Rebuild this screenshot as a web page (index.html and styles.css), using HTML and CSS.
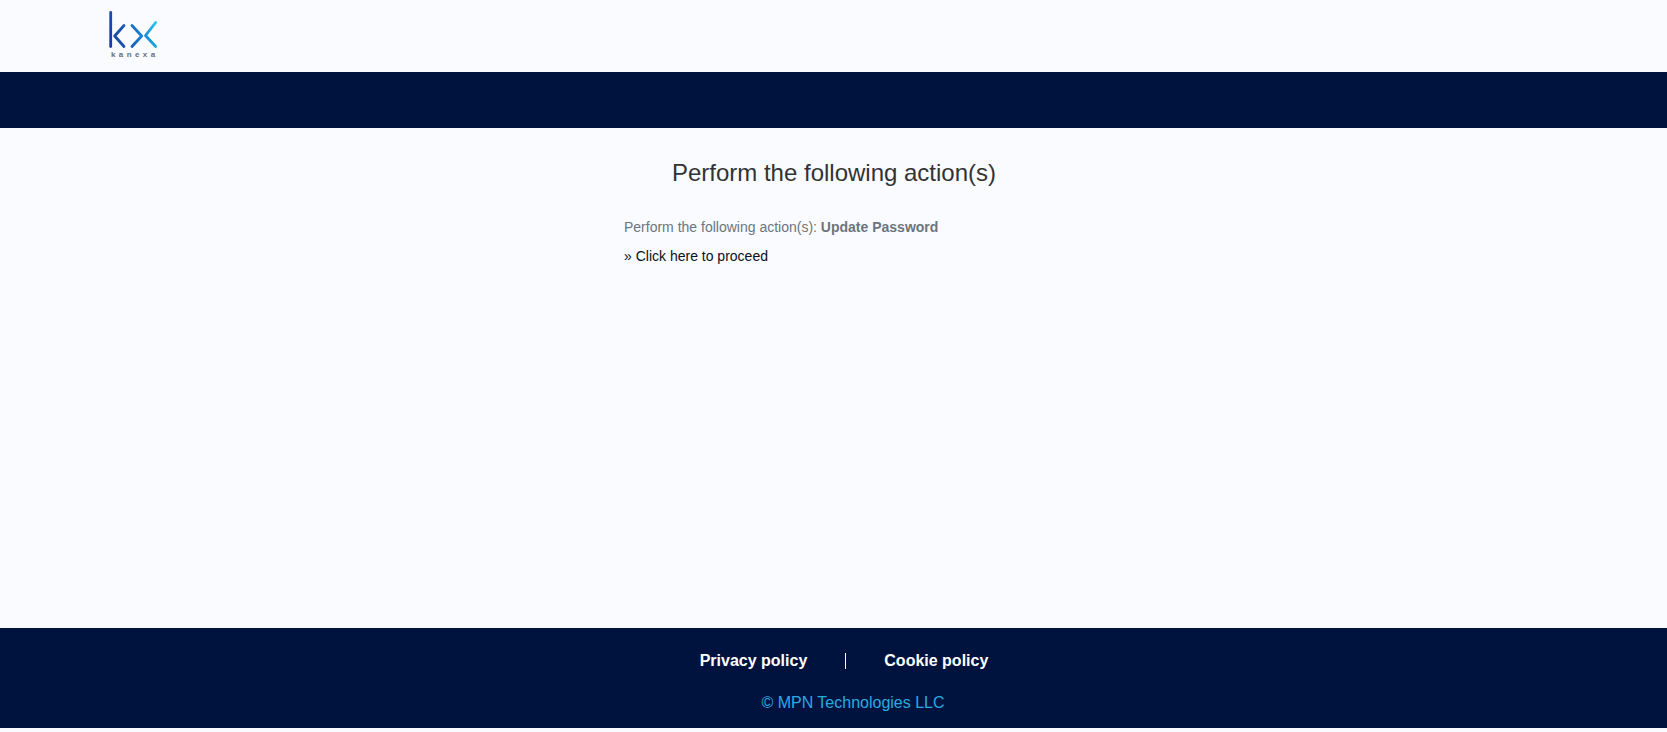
FILE: index.html
```html
<!DOCTYPE html>
<html lang="en">
<head>
<meta charset="utf-8">
<title>Perform the following action(s)</title>
<link rel="stylesheet" href="styles.css">
</head>
<body>
<header class="top">
  <a class="logo" href="#" aria-label="kanexa">
    <svg class="logo-mark" width="50" height="38" viewBox="0 0 50 38" aria-hidden="true">
      <defs>
        <linearGradient id="kx" gradientUnits="userSpaceOnUse" x1="0" y1="30" x2="50" y2="14">
          <stop offset="0" stop-color="#1a3a9c"/>
          <stop offset="0.45" stop-color="#1a62bb"/>
          <stop offset="0.75" stop-color="#1a94d8"/>
          <stop offset="1" stop-color="#25ccf0"/>
        </linearGradient>
      </defs>
      <path class="logo-stroke" d="M2.700 1.500V35.500"/>
      <path class="logo-stroke" d="M16 14.500L6.700 25L16 35.500"/>
      <path class="logo-stroke" d="M24 14.500L33.700 25L24 35.500"/>
      <path class="logo-stroke" d="M47.700 11.500L37.500 24.500L47.700 35.500"/>
    </svg>
    <span class="logo-text">kanexa</span>
  </a>
</header>
<div class="band"></div>
<main class="content">
  <h1 class="title">Perform the following action(s)</h1>
  <div class="message">
    <p class="instruction">Perform the following action(s): <strong>Update Password</strong></p>
    <p class="proceed"><a href="#">» Click here to proceed</a></p>
  </div>
</main>
<footer class="foot">
  <nav class="foot-links">
    <a href="#">Privacy policy</a>
    <span class="divider"></span>
    <a href="#">Cookie policy</a>
  </nav>
  <p class="copy">© MPN Technologies LLC</p>
</footer>
</body>
</html>
```
FILE: styles.css
```css
* { box-sizing: border-box; }
html, body { height: 100%; }
body {
  margin: 0;
  background: #f9fbff;
  font-family: "Liberation Sans", Arial, sans-serif;
  display: flex;
  flex-direction: column;
  height: 732px;
  overflow: hidden;
}
.top {
  height: 72px;
  padding: 11px 0 0 108px;
}
.logo {
  display: inline-flex;
  flex-direction: column;
  text-decoration: none;
  width: 50px;
}
.logo-mark { display: block; }
.logo-stroke {
  fill: none;
  stroke: url(#kx);
  stroke-width: 2.8;
  stroke-linecap: round;
  stroke-linejoin: round;
}
.logo-text {
  font-size: 8px;
  font-weight: 700;
  line-height: 8px;
  letter-spacing: 3.4px;
  padding-left: 3px;
  white-space: nowrap;
  color: #6a7077;
  margin-top: 2px;
}
.band {
  height: 56px;
  background: #00133e;
}
.content {
  height: 500px;
  padding-top: 32px;
}
.title {
  margin: 0;
  padding-left: 1px;
  font-size: 24px;
  line-height: 26px;
  font-weight: 400;
  color: #333333;
  text-align: center;
}
.message {
  width: 419px;
  margin: 31px auto 0;
  font-size: 14px;
  line-height: 20px;
}
.instruction { margin: 0; color: #6c757d; }
.proceed { margin: 9px 0 0; }
.proceed a { color: #0a0f22; text-decoration: none; }
.foot {
  height: 100px;
  background: #00133e;
  padding-top: 23px;
  font-size: 16px;
}
.foot-links {
  display: flex;
  justify-content: center;
  align-items: center;
  gap: 38px;
  height: 20px;
  padding-left: 21px;
}
.foot-links a {
  color: #ffffff;
  font-weight: 700;
  text-decoration: none;
}
.divider {
  width: 1px;
  height: 16px;
  background: #ffffff;
}
.copy {
  margin: 22px 0 0;
  color: #29abe2;
  line-height: 20px;
  text-align: center;
  padding-left: 39px;
}
```
